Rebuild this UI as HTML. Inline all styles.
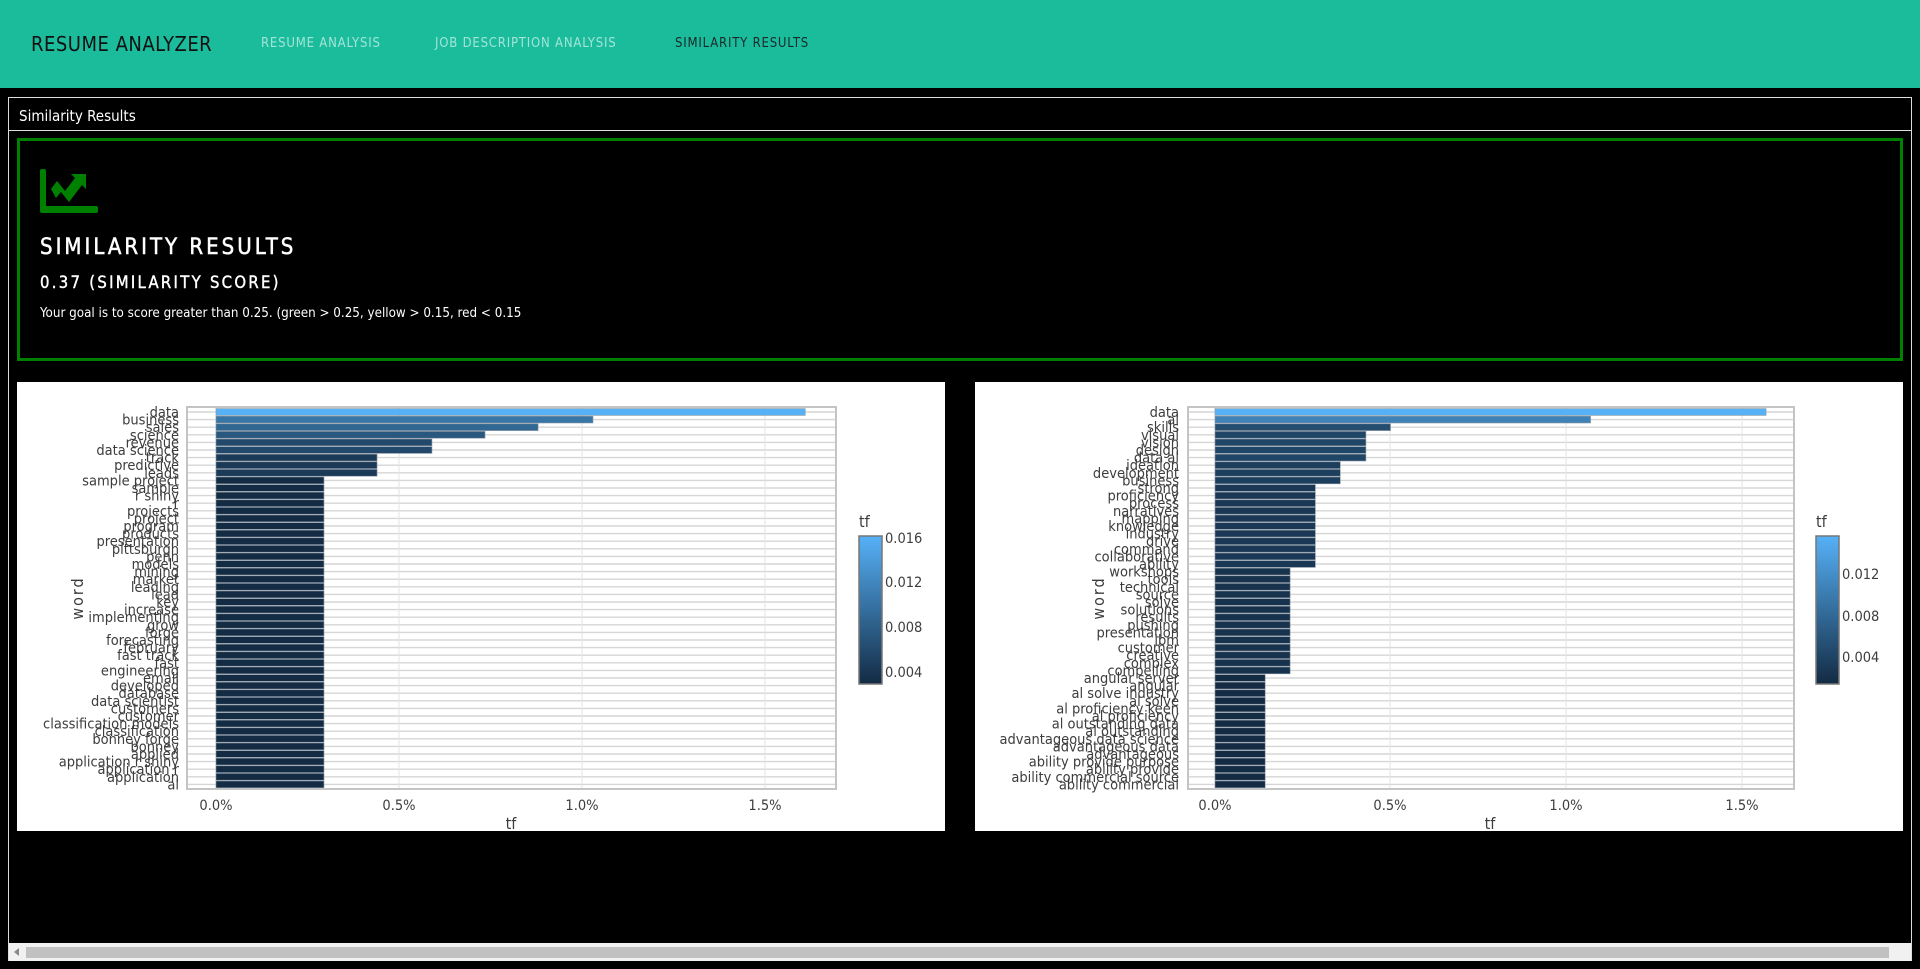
<!DOCTYPE html>
<html><head><meta charset="utf-8"><style>
*{margin:0;padding:0;box-sizing:border-box}
body{width:1920px;height:969px;background:#000;overflow:hidden;position:relative;font-family:"Liberation Sans Narrow","DejaVu Sans Condensed","Liberation Sans",sans-serif;color:#fff}
.hdr{position:absolute;left:0;top:0;width:1920px;height:88px;background:#1abc9c}
.hdr .brand{position:absolute;left:31px;top:32px;font-size:20px;color:#111;letter-spacing:0.5px}
.hdr .nav{position:absolute;top:36px;font-size:13px;letter-spacing:0.8px;color:rgba(255,255,255,0.6)}
.card{position:absolute;left:8px;top:97px;width:1904px;height:864px;border:1px solid #ddd;border-bottom:none}
.card .ch{height:33px;border-bottom:1px solid #ddd;font-size:15px;padding:9px 0 0 10px}
.box{position:absolute;left:17px;top:138px;width:1886px;height:223px;border:3px solid #008000}
.box h2{position:absolute;left:20px;top:94px;font-size:22px;letter-spacing:3px;font-weight:normal;-webkit-text-stroke:0.5px #fff}
.box h3{position:absolute;left:20px;top:132px;font-size:16.5px;letter-spacing:2.3px;font-weight:normal;-webkit-text-stroke:0.4px #fff}
.box p{position:absolute;left:20px;top:165px;font-size:13.3px}
.sb{position:absolute;left:9px;top:943px;width:1902px;height:18px;background:#f1f1f1}
.sb .th{position:absolute;left:17px;top:4px;width:1863px;height:11px;background:#c1c1c1}
</style></head><body>
<div class="hdr">
<div class="brand">RESUME ANALYZER</div>
<div class="nav" style="left:261px">RESUME ANALYSIS</div>
<div class="nav" style="left:435px">JOB DESCRIPTION ANALYSIS</div>
<div class="nav" style="left:675px;color:#1a2a2a">SIMILARITY RESULTS</div>
</div>
<div class="card"><div class="ch">Similarity Results</div></div>
<div class="box">
<svg style="position:absolute;left:20px;top:28px" width="58" height="44" viewBox="0 0 58 44"><path d="M0 2q0-2 2-2h2q2 0 2 2v35h50q2 0 2 2v3q0 2-2 2H2q-2 0-2-2z" fill="#008000"/><path d="M11 20l6-8 8 10 10-13-4-4h15v15l-4-4-13 17-8-10-5 6z" fill="#008000"/></svg>
<h2>SIMILARITY RESULTS</h2>
<h3>0.37 (SIMILARITY SCORE)</h3>
<p>Your goal is to score greater than 0.25. (green &gt; 0.25, yellow &gt; 0.15, red &lt; 0.15</p>
</div>
<svg id="c" style="position:absolute;left:0;top:0" width="1920" height="969" font-family="'Liberation Sans Narrow','DejaVu Sans Condensed','Liberation Sans',sans-serif">
<defs><linearGradient id="cb" x1="0" y1="1" x2="0" y2="0"><stop offset="0" stop-color="#132b43"/><stop offset="1" stop-color="#56b1f7"/></linearGradient></defs>
<rect x="17" y="382" width="928" height="449" fill="#fff"/>
<rect x="975" y="382" width="928" height="449" fill="#fff"/>
<g id="bars"></g>
<rect x="187" y="407" width="649" height="382" fill="none" stroke="#c4c4c4" stroke-width="2"/>
<rect x="1188" y="407" width="606" height="382" fill="none" stroke="#c4c4c4" stroke-width="2"/>
<g font-size="14.5" fill="#3d3d3d">
<text x="179" y="417" text-anchor="end"><tspan x="179" dy="0">data</tspan><tspan x="179" dy="7.6">business</tspan><tspan x="179" dy="7.6">sales</tspan><tspan x="179" dy="7.6">science</tspan><tspan x="179" dy="7.6">revenue</tspan><tspan x="179" dy="7.6">data science</tspan><tspan x="179" dy="7.6">track</tspan><tspan x="179" dy="7.6">predictive</tspan><tspan x="179" dy="7.6">leads</tspan><tspan x="179" dy="7.6">sample project</tspan><tspan x="179" dy="7.6">sample</tspan><tspan x="179" dy="7.6">r shiny</tspan><tspan x="179" dy="7.6">r</tspan><tspan x="179" dy="7.6">projects</tspan><tspan x="179" dy="7.6">project</tspan><tspan x="179" dy="7.6">program</tspan><tspan x="179" dy="7.6">products</tspan><tspan x="179" dy="7.6">presentation</tspan><tspan x="179" dy="7.6">pittsburgh</tspan><tspan x="179" dy="7.6">penn</tspan><tspan x="179" dy="7.6">models</tspan><tspan x="179" dy="7.6">mining</tspan><tspan x="179" dy="7.6">market</tspan><tspan x="179" dy="7.6">leading</tspan><tspan x="179" dy="7.6">lead</tspan><tspan x="179" dy="7.6">key</tspan><tspan x="179" dy="7.6">increase</tspan><tspan x="179" dy="7.6">implementing</tspan><tspan x="179" dy="7.6">grow</tspan><tspan x="179" dy="7.6">forge</tspan><tspan x="179" dy="7.6">forecasting</tspan><tspan x="179" dy="7.6">february</tspan><tspan x="179" dy="7.6">fast track</tspan><tspan x="179" dy="7.6">fast</tspan><tspan x="179" dy="7.6">engineering</tspan><tspan x="179" dy="7.6">email</tspan><tspan x="179" dy="7.6">developed</tspan><tspan x="179" dy="7.6">database</tspan><tspan x="179" dy="7.6">data scientist</tspan><tspan x="179" dy="7.6">customers</tspan><tspan x="179" dy="7.6">customer</tspan><tspan x="179" dy="7.6">classification models</tspan><tspan x="179" dy="7.6">classification</tspan><tspan x="179" dy="7.6">bonney forge</tspan><tspan x="179" dy="7.6">bonney</tspan><tspan x="179" dy="7.6">applied</tspan><tspan x="179" dy="7.6">application r shiny</tspan><tspan x="179" dy="7.6">application r</tspan><tspan x="179" dy="7.6">application</tspan><tspan x="179" dy="7.6">al</tspan></text>
<text x="1179" y="417" text-anchor="end"><tspan x="1179" dy="0">data</tspan><tspan x="1179" dy="7.6">al</tspan><tspan x="1179" dy="7.6">skills</tspan><tspan x="1179" dy="7.6">visual</tspan><tspan x="1179" dy="7.6">vision</tspan><tspan x="1179" dy="7.6">design</tspan><tspan x="1179" dy="7.6">data al</tspan><tspan x="1179" dy="7.6">ideation</tspan><tspan x="1179" dy="7.6">development</tspan><tspan x="1179" dy="7.6">business</tspan><tspan x="1179" dy="7.6">strong</tspan><tspan x="1179" dy="7.6">proficiency</tspan><tspan x="1179" dy="7.6">process</tspan><tspan x="1179" dy="7.6">narratives</tspan><tspan x="1179" dy="7.6">mapping</tspan><tspan x="1179" dy="7.6">knowledge</tspan><tspan x="1179" dy="7.6">industry</tspan><tspan x="1179" dy="7.6">drive</tspan><tspan x="1179" dy="7.6">command</tspan><tspan x="1179" dy="7.6">collaborative</tspan><tspan x="1179" dy="7.6">ability</tspan><tspan x="1179" dy="7.6">workshops</tspan><tspan x="1179" dy="7.6">tools</tspan><tspan x="1179" dy="7.6">technical</tspan><tspan x="1179" dy="7.6">source</tspan><tspan x="1179" dy="7.6">solve</tspan><tspan x="1179" dy="7.6">solutions</tspan><tspan x="1179" dy="7.6">results</tspan><tspan x="1179" dy="7.6">pushing</tspan><tspan x="1179" dy="7.6">presentation</tspan><tspan x="1179" dy="7.6">ibm</tspan><tspan x="1179" dy="7.6">customer</tspan><tspan x="1179" dy="7.6">creative</tspan><tspan x="1179" dy="7.6">complex</tspan><tspan x="1179" dy="7.6">compelling</tspan><tspan x="1179" dy="7.6">angular server</tspan><tspan x="1179" dy="7.6">angular</tspan><tspan x="1179" dy="7.6">al solve industry</tspan><tspan x="1179" dy="7.6">al solve</tspan><tspan x="1179" dy="7.6">al proficiency keen</tspan><tspan x="1179" dy="7.6">al proficiency</tspan><tspan x="1179" dy="7.6">al outstanding data</tspan><tspan x="1179" dy="7.6">al outstanding</tspan><tspan x="1179" dy="7.6">advantageous data science</tspan><tspan x="1179" dy="7.6">advantageous data</tspan><tspan x="1179" dy="7.6">advantageous</tspan><tspan x="1179" dy="7.6">ability provide purpose</tspan><tspan x="1179" dy="7.6">ability provide</tspan><tspan x="1179" dy="7.6">ability commercial source</tspan><tspan x="1179" dy="7.6">ability commercial</tspan></text>
<g text-anchor="middle"><text x="216" y="810">0.0%</text><text x="399" y="810">0.5%</text><text x="582" y="810">1.0%</text><text x="765" y="810">1.5%</text>
<text x="1215" y="810">0.0%</text><text x="1390" y="810">0.5%</text><text x="1566" y="810">1.0%</text><text x="1742" y="810">1.5%</text></g>
<text x="885" y="543">0.016</text><text x="885" y="587">0.012</text><text x="885" y="632">0.008</text><text x="885" y="677">0.004</text>
<text x="1842" y="579">0.012</text><text x="1842" y="621">0.008</text><text x="1842" y="662">0.004</text>
</g>
<g font-size="16" fill="#3d3d3d"><text x="511" y="829" text-anchor="middle">tf</text><text x="1490" y="829" text-anchor="middle">tf</text>
<text x="859" y="527">tf</text><text x="1816" y="527">tf</text>
<text transform="translate(83,598) rotate(-90)" text-anchor="middle" letter-spacing="2">word</text>
<text transform="translate(1104,598) rotate(-90)" text-anchor="middle" letter-spacing="2">word</text></g>
<rect x="859" y="536" width="23" height="148" fill="url(#cb)" stroke="#777" stroke-width="1.5"/>
<rect x="1816" y="536" width="23" height="148" fill="url(#cb)" stroke="#777" stroke-width="1.5"/>
</svg>
<div class="sb"><div class="th"></div><svg style="position:absolute;left:4px;top:5px" width="8" height="8"><path d="M6 0v8L1 4z" fill="#888"/></svg></div>
<script>
(function(){
var g=document.getElementById('bars'),ns='http://www.w3.org/2000/svg';
function col(t){var a=[0x13,0x2b,0x43],b=[0x56,0xb1,0xf7];return 'rgb('+a.map(function(v,i){return Math.round(v+(b[i]-v)*t)}).join(',')+')';}
function el(n,o){var e=document.createElementNS(ns,n);for(var k in o)e.setAttribute(k,o[k]);g.appendChild(e);}
function chart(x0,x1,pl,pr,vals,vmin,vmax,ticks){
 for(var i=0;i<50;i++){var y=412+i*7.6;el('line',{x1:pl,x2:pr,y1:y,y2:y,stroke:'#d6d6d6','stroke-width':1.4});}
 ticks.forEach(function(t){el('line',{x1:t,x2:t,y1:407,y2:789,stroke:'#e3e3e3','stroke-width':1});});
 for(var i=0;i<50;i++){var v=vals[i],y=412+i*7.6-3.4;el('rect',{x:x0,y:y,width:v*x1,height:6.8,fill:col(Math.max(0,Math.min(1,(v-vmin)/(vmax-vmin)))),stroke:'#8a96a3','stroke-width':0.6});}
}
var L=[1.61,1.03,0.88,0.735,0.59,0.59,0.44,0.44,0.44];while(L.length<50)L.push(0.295);
var R=[1.57,1.07,0.5,0.43,0.43,0.43,0.43,0.357,0.357,0.357];for(var i=0;i<11;i++)R.push(0.286);for(i=0;i<14;i++)R.push(0.214);while(R.length<50)R.push(0.143);
chart(216,366,188,835,L,0.295,1.61,[216,399,582,765]);
chart(1215,351,1189,1793,R,0.143,1.57,[1215,1390,1566,1742]);
})();
</script>
</body></html>
